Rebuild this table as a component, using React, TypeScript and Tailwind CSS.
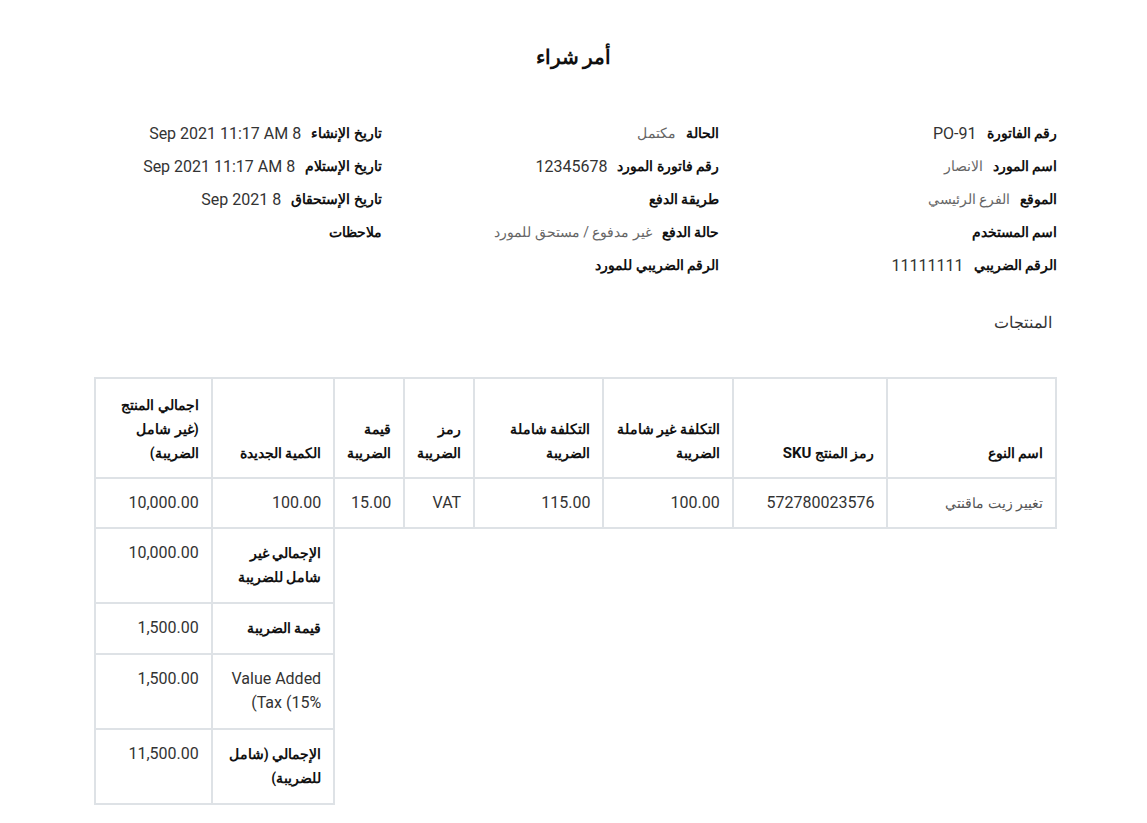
import React from "react";

const infoColumns = [
    [
        { label: "رقم الفاتورة", value: "PO-91", latin: true },
        { label: "اسم المورد", value: "الانصار" },
        { label: "الموقع", value: "الفرع الرئيسي" },
        { label: "اسم المستخدم", value: "" },
        { label: "الرقم الضريبي", value: "11111111", latin: true },
    ],
    [
        { label: "الحالة", value: "مكتمل" },
        { label: "رقم فاتورة المورد", value: "12345678", latin: true },
        { label: "طريقة الدفع", value: "" },
        { label: "حالة الدفع", value: "غير مدفوع / مستحق للمورد" },
        { label: "الرقم الضريبي للمورد", value: "" },
    ],
    [
        { label: "تاريخ الإنشاء", value: "8 Sep 2021 11:17 AM", latin: true },
        { label: "تاريخ الإستلام", value: "8 Sep 2021 11:17 AM", latin: true },
        { label: "تاريخ الإستحقاق", value: "8 Sep 2021", latin: true },
        { label: "ملاحظات", value: "" },
    ],
];

const headers = [
    "اسم النوع",
    "SKU",
    "التكلفة غير شاملة الضريبة",
    "التكلفة شاملة الضريبة",
    "رمز الضريبة",
    "قيمة الضريبة",
    "الكمية الجديدة",
    "اجمالي المنتج (غير شامل الضريبة)",
];

const colWidths = ["w-[170px]", "w-[155px]", "w-[130px]", "w-[130px]", "w-[69px]", "w-[69px]", "w-[123px]", "w-[117px]"];

const summary = [
    { label: "الإجمالي غير شامل للضريبة", value: "10,000.00", bold: true },
    { label: "قيمة الضريبة", value: "1,500.00", bold: true },
    { label: "Value Added Tax (15%)", value: "1,500.00", bold: false },
    { label: "الإجمالي (شامل للضريبة)", value: "11,500.00", bold: true },
];

const cell = "border-2 border-[#dee2e6] px-3 text-right";

const App = () => {
    return (
        <div dir="rtl" className="min-h-[823px] bg-white font-['Roboto',sans-serif] text-[#333]">
            {/* title */}
            <div className="pt-[42px] text-center text-[20px] leading-[30px] font-bold text-[#111]">أمر شراء</div>

            {/* info */}
            <div className="mt-[45px] mr-[90px] ml-[44px] grid grid-cols-3">
                {infoColumns.map((col, i) => (
                    <div key={i} className="flex flex-col">
                        {col.map((row) => (
                            <div key={row.label} className="flex h-[33px] items-center gap-[10px]">
                                <span className="text-[14px] font-bold text-[#111]">{row.label}</span>
                                {row.value && (
                                    <span className={row.latin ? "text-[16px] text-[#333]" : "text-[14px] text-[#666]"}>
                                        {row.value}
                                    </span>
                                )}
                            </div>
                        ))}
                    </div>
                ))}
            </div>

            {/* products */}
            <div className="mt-[29px] mr-[95px] text-[16px] leading-[24px] text-[#333]">المنتجات</div>

            <div className="mt-[42px] mr-[90px] ml-[94px]">
                <table className="w-[963px] border-collapse">
                    <colgroup>
                        {colWidths.map((w, i) => (
                            <col key={i} className={w} />
                        ))}
                    </colgroup>
                    <thead>
                        <tr>
                            {headers.map((h) => (
                                <th
                                    key={h}
                                    className={`${cell} py-3 h-[100px] align-bottom text-[14px] leading-[24px] font-bold text-[#111]`}
                                >
                                    {h === "SKU" ? (
                                        <>
                                            رمز المنتج <span className="text-[15px]">SKU</span>
                                        </>
                                    ) : (
                                        h
                                    )}
                                </th>
                            ))}
                        </tr>
                    </thead>
                    <tbody className="text-[16px] leading-[24px]">
                        <tr>
                            <td className={`${cell} py-3 text-[14px] text-[#555]`}>تغيير زيت ماقنتي</td>
                            <td className={`${cell} py-3`}>572780023576</td>
                            <td className={`${cell} py-3`}>100.00</td>
                            <td className={`${cell} py-3`}>115.00</td>
                            <td className={`${cell} py-3`}>VAT</td>
                            <td className={`${cell} py-3`}>15.00</td>
                            <td className={`${cell} py-3`}>100.00</td>
                            <td className={`${cell} py-3`}>10,000.00</td>
                        </tr>
                        {summary.map((s) => (
                            <tr key={s.label}>
                                <td colSpan={6} className="border-0"></td>
                                <td
                                    className={`${cell} pt-3 pb-[13px] align-top ${
                                        s.bold ? "text-[14px] font-bold text-[#111]" : "text-[16px] text-[#333]"
                                    }`}
                                >
                                    {s.bold ? s.label : <span dir="ltr">Value Added (Tax (15%</span>}
                                </td>
                                <td className={`${cell} pt-3 pb-[13px] align-top`}>{s.value}</td>
                            </tr>
                        ))}
                    </tbody>
                </table>
            </div>
        </div>
    );
};

export default App;
